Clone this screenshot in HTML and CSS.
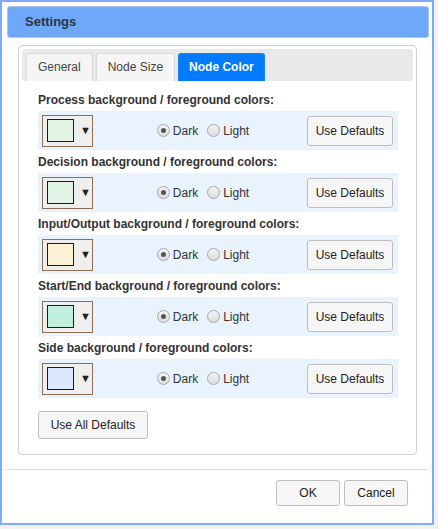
FILE: index.html
```html
<!DOCTYPE html>
<html>
<head>
<meta charset="utf-8">
<link rel="stylesheet" href="styles.css">
</head>
<body>
<div class="dialog">
  <div class="header">Settings</div>
  <div class="panel">
    <div class="tabs">
      <div class="tab">General</div>
      <div class="tab">Node Size</div>
      <div class="tab active">Node Color</div>
    </div>
    <div class="content">
      <div class="label">Process background / foreground colors:</div>
      <div class="row">
        <div class="swatch-btn"><span class="swatch c-process"></span><span class="caret">&#9660;</span></div>
        <div class="radios">
          <span class="radio"><span class="dot checked"></span>Dark</span>
          <span class="radio"><span class="dot"></span>Light</span>
        </div>
        <div class="btn">Use Defaults</div>
      </div>
      <div class="label">Decision background / foreground colors:</div>
      <div class="row">
        <div class="swatch-btn"><span class="swatch c-decision"></span><span class="caret">&#9660;</span></div>
        <div class="radios">
          <span class="radio"><span class="dot checked"></span>Dark</span>
          <span class="radio"><span class="dot"></span>Light</span>
        </div>
        <div class="btn">Use Defaults</div>
      </div>
      <div class="label">Input/Output background / foreground colors:</div>
      <div class="row">
        <div class="swatch-btn"><span class="swatch c-io"></span><span class="caret">&#9660;</span></div>
        <div class="radios">
          <span class="radio"><span class="dot checked"></span>Dark</span>
          <span class="radio"><span class="dot"></span>Light</span>
        </div>
        <div class="btn">Use Defaults</div>
      </div>
      <div class="label">Start/End background / foreground colors:</div>
      <div class="row">
        <div class="swatch-btn"><span class="swatch c-start"></span><span class="caret">&#9660;</span></div>
        <div class="radios">
          <span class="radio"><span class="dot checked"></span>Dark</span>
          <span class="radio"><span class="dot"></span>Light</span>
        </div>
        <div class="btn">Use Defaults</div>
      </div>
      <div class="label">Side background / foreground colors:</div>
      <div class="row">
        <div class="swatch-btn"><span class="swatch c-side"></span><span class="caret">&#9660;</span></div>
        <div class="radios">
          <span class="radio"><span class="dot checked"></span>Dark</span>
          <span class="radio"><span class="dot"></span>Light</span>
        </div>
        <div class="btn">Use Defaults</div>
      </div>
      <div class="all-row"><div class="btn btn-all">Use All Defaults</div></div>
    </div>
  </div>
  <div class="footer">
    <div class="btn btn-foot">OK</div>
    <div class="btn btn-foot">Cancel</div>
  </div>
</div>
</body>
</html>
```
FILE: styles.css
```css
* { box-sizing: border-box; }
html, body { margin: 0; padding: 0; }
body {
  background: #f1f1f1;
  font-family: "Liberation Sans", Arial, sans-serif;
  font-size: 12px;
  color: #222;
}
.dialog {
  width: 434px;
  height: 525px;
  border: 2px solid #80aaf6;
  background: #fff;
  display: flex;
  flex-direction: column;
}
.header {
  margin: 4px 3px 0 5px;
  height: 32px;
  background: #6fa8f8;
  border: 1px solid #a9c6ee;
  border-radius: 3px;
  font-weight: bold;
  font-size: 13px;
  color: #2f3640;
  padding-left: 17px;
  line-height: 30px;
}
.panel {
  margin: 7px 15px 0 16px;
  border: 1px solid #cfcfcf;
  border-radius: 4px;
  padding: 3px 3px 15px 3px;
}
.tabs {
  background: #e9e9e9;
  border-radius: 3px;
  height: 32px;
  padding: 4px 4px 0 4px;
  display: flex;
  gap: 3px;
}
.tab {
  height: 28px;
  line-height: 27px;
  padding: 0 11px;
  background: #f5f5f5;
  border: 1px solid #dadada;
  border-bottom: none;
  border-radius: 3px 3px 0 0;
  color: #444;
}
.tab.active {
  padding: 0 10px;
  background: #007bff;
  border-color: #1a84f5;
  color: #fff;
  font-weight: bold;
}
.content {
  padding: 7px 15px 0 16px;
}
.label {
  font-weight: bold;
  color: #333;
  line-height: 17px;
  padding: 4px 0 2px 0;
}
.row {
  height: 39px;
  background: #e8f3fe;
  display: flex;
  align-items: center;
  padding: 0 5px 0 4px;
}
.swatch-btn {
  width: 51px;
  height: 32px;
  background: #efefef;
  border: 1px solid #8e6d55;
  display: flex;
  align-items: center;
  padding-left: 4px;
}
.swatch {
  width: 27px;
  height: 23px;
  border: 1px solid #1a1a1a;
}
.c-process { background: #e2f5e7; }
.c-decision { background: #e2f5e7; }
.c-io { background: #fdf2d5; }
.c-start { background: #c1efdd; }
.c-side { background: #dce9fc; }
.caret {
  font-size: 11px;
  color: #222;
  margin-left: 6px;
  line-height: 1;
}
.radios {
  flex: 1;
  display: flex;
  justify-content: center;
  padding-left: 6px;
  gap: 9px;
}
.radio {
  display: flex;
  align-items: center;
  color: #333;
}
.dot {
  width: 13px;
  height: 13px;
  border-radius: 50%;
  border: 1px solid #a8a8a8;
  background: linear-gradient(#f4f4f4, #dcdcdc);
  margin-right: 3px;
  display: flex;
  align-items: center;
  justify-content: center;
}
.dot.checked::after {
  content: "";
  width: 5px;
  height: 5px;
  border-radius: 50%;
  background: #555;
}
.btn {
  background: #f6f6f6;
  border: 1px solid #bdbdbd;
  border-radius: 3px;
  color: #222;
  text-align: center;
}
.row .btn {
  width: 86px;
  height: 30px;
  line-height: 28px;
}
.all-row {
  padding-top: 13px;
  display: flex;
}
.btn-all {
  width: 110px;
  height: 28px;
  line-height: 26px;
}
.footer {
  margin: 14px 3px 0 4px;
  border-top: 1px solid #dcdcdc;
  padding: 10px 21px 0 0;
  display: flex;
  justify-content: flex-end;
  gap: 4px;
}
.btn-foot {
  width: 64px;
  height: 26px;
  line-height: 24px;
}
```
